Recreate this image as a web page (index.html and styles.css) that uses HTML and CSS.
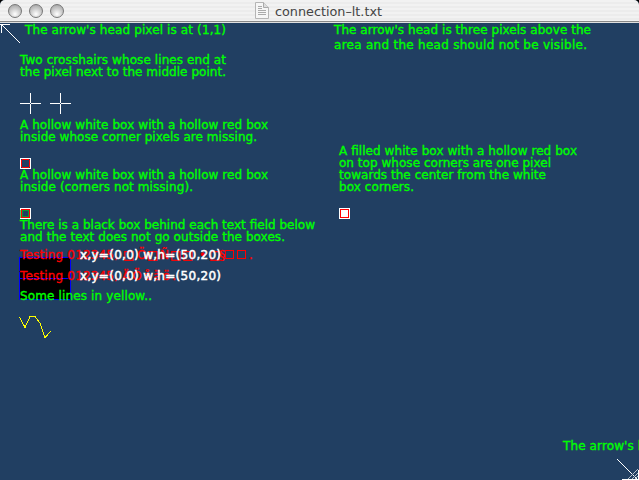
FILE: index.html
```html
<!DOCTYPE html>
<html lang="en">
<head>
<meta charset="utf-8">
<title>connection-lt.txt</title>
<link rel="stylesheet" href="styles.css">
</head>
<body>
<div class="window">
  <header class="titlebar">
    <div class="buttons"><i class="button"></i><i class="button"></i><i class="button"></i></div>
    <div class="title">
      <svg class="doc" width="14" height="17" viewBox="0 0 14 17"><path d="M.5.5h8l5 5v11H.5z" fill="#f6f6f6" stroke="#b5b5b5"/><path d="M8.500 .5v5h5" fill="#ddd" stroke="#aaa"/><path d="M3 4.500h4M3 6.500h4M3 8.500h8M3 10.500h8M3 12.500h8" stroke="#aaa"/></svg>
      <svg class="name" width="110" height="20"><text x="0" y="15" textLength="107" lengthAdjust="spacingAndGlyphs">connection–lt.txt</text></svg>
    </div>
  </header>
  <svg class="canvas" width="639" height="457" viewBox="0 23 639 457">
    <g shape-rendering="crispEdges" fill="none">
      <path d="M19.500 257.500h51v42h-51z" fill="#000" stroke="#00f"/>
      <path d="M19 278.500h52" stroke="#00f"/>
    </g>
    <g class="green">
      <text x="25" y="34" textLength="201">The arrow's head pixel is at (1,1)</text>
      <text x="334" y="34" textLength="257">The arrow's head is three pixels above the</text>
      <text x="334" y="49" textLength="253">area and the head should not be visible.</text>
      <text x="20" y="64" textLength="206">Two crosshairs whose lines end at</text>
      <text x="20" y="76" textLength="206">the pixel next to the middle point.</text>
      <text x="20" y="129" textLength="248">A hollow white box with a hollow red box</text>
      <text x="20" y="141" textLength="237">inside whose corner pixels are missing.</text>
      <text x="20" y="179" textLength="248">A hollow white box with a hollow red box</text>
      <text x="20" y="191" textLength="173">inside (corners not missing).</text>
      <text x="20" y="229" textLength="295">There is a black box behind each text field below</text>
      <text x="20" y="241" textLength="265">and the text does not go outside the boxes.</text>
      <text x="339" y="155" textLength="238">A filled white box with a hollow red box</text>
      <text x="339" y="167" textLength="212">on top whose corners are one pixel</text>
      <text x="339" y="179" textLength="207">towards the center from the white</text>
      <text x="339" y="191" textLength="75">box corners.</text>
      <text x="20" y="300" textLength="132">Some lines in yellow..</text>
      <text x="563" y="450" textLength="201">The arrow's head pixel is at (1,1)</text>
    </g>
    <g class="red">
      <text x="20" y="259" textLength="98">Testing 012345,</text>
      <text y="259" x="123 137 147 160 170 182 199 209 219">□Ö□Ñ□□•□§</text>
      <text x="249" y="259">.</text>
      <path d="M225.500 250.500h8v8h-8zM237.500 250.500h8v8h-8z" fill="none" stroke="#f00" shape-rendering="crispEdges"/>
      <text x="20" y="280" textLength="98">Testing 012345,</text>
      <text x="122" y="280" textLength="54">ÄÖåäö.</text>
    </g>
    <g class="white">
      <text x="80" y="259" textLength="141">x,y=(0,0) w,h=(50,20)</text>
      <text x="80" y="280" textLength="141">x,y=(0,0) w,h=(50,20)</text>
    </g>
    <g shape-rendering="crispEdges" fill="none" stroke="#fff">
      <path d="M0 24.500h10M1.500 24v9M1 24L20 43"/>
      <path d="M20 103.500h10M31 103.500h10M30.500 93v10M30.500 104v10M50 103.500h10M61 103.500h10M60.500 93v10M60.500 104v10"/>
      <path d="M20.500 158.500h10v10h-10zM20.500 208.500h10v10h-10z"/>
      <path d="M339.500 208.500h10v10h-10z" fill="#fff"/>
      <path d="M617 459L637 479M622 479.500h17M638.500 470v10"/>
      <path d="M628 479L638 469M632 479L638 473M635 479L638 476" stroke="#b8c0ca"/>
      <g stroke="#f00">
        <path d="M22 159.500h7M22 167.500h7M21.500 160v7M29.500 160v7"/>
        <path d="M21.500 209.500h8v8h-8zM340.500 209.500h8v8h-8z"/>
      </g>
      <path d="M20.500 218V210M22.500 216.500v-6h6v6z" stroke="#00c020" stroke-opacity=".7"/>
      <path d="M19.500 317L25 327.500L30 316.500H35L40 323L45 337.500L51 331" stroke="#ff0"/>
    </g>
  </svg>
</div>
</body>
</html>
```
FILE: styles.css
```css
body { margin: 0; background: #000; }
.window { width: 639px; height: 480px; overflow: hidden; display: flex; flex-direction: column; border-radius: 5px 5px 0 0; background: #213f62; }
.titlebar { height: 22px; flex: none; box-sizing: border-box; display: flex; align-items: center; padding-left: 8px; border-bottom: 1px solid #888; background: repeating-linear-gradient(#f2f2f2 0 2px, #ececec 2px 4px); }
.buttons { display: flex; gap: 7px; width: 247px; flex: none; }
.button { width: 14px; height: 14px; box-sizing: border-box; border: 1px solid #777; border-radius: 50%; background: radial-gradient(circle at 50% 75%, #fff, #d0d0d0 45%, #999); }
.title { display: flex; align-items: center; gap: 6px; }
.name { font: 13px "DejaVu Sans", sans-serif; fill: #444; }
.canvas { display: block; flex: none; border-top: 1px solid #e0e0e0; font: 12px "DejaVu Sans", sans-serif; }
.green { fill: #00ff00; }
.green text { stroke: #00ff00; stroke-width: .35px; }
.red { fill: #f00; }
.red text { stroke: #f00; stroke-width: .35px; }
.white { fill: #fff; stroke: #fff; stroke-width: .5px; }
```
